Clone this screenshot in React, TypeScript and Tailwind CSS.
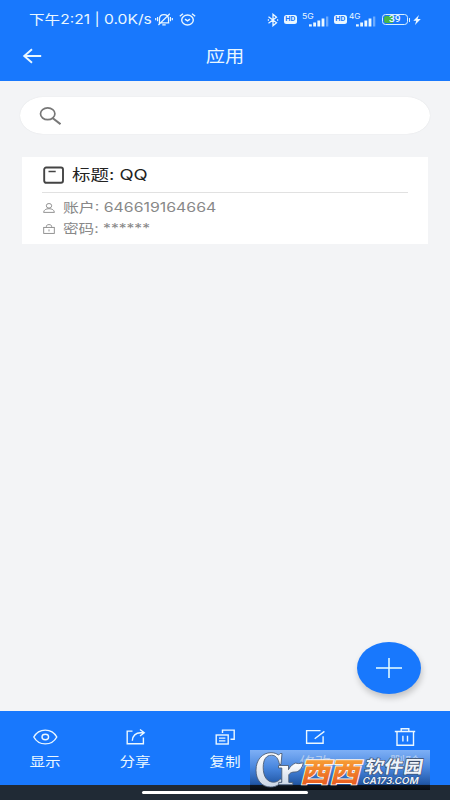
import React from 'react';

interface IconProps {
  className?: string;
}

interface TextProps {
  children: React.ReactNode;
  className?: string;
}

// Text in this layout is wider than it is tall
const Wide: React.FC<TextProps> = ({ children, className = '' }) => (
  <span className={`block whitespace-nowrap ${className}`}>{children}</span>
);

const BellOffIcon: React.FC<IconProps> = ({ className = '' }) => (
  <svg className={className} viewBox="0 0 18 13" fill="none" stroke="currentColor" strokeWidth="1.2">
    <path d="M4.5 9.700V6C4.500 3.300 6.400 1.600 9 1.600S13.500 3.300 13.500 6v3.700M3.700 9.900h10.600M7.300 11.900h3.400M14.800.7 3.400 12M2.600 4v4.300M.7 5v2.300M15.400 4v4.300M17.300 5v2.300" />
  </svg>
);

const AlarmIcon: React.FC<IconProps> = ({ className = '' }) => (
  <svg className={className} viewBox="0 0 17 13" fill="none" stroke="currentColor" strokeWidth="1.4">
    <ellipse cx="8.5" cy="7" rx="5.8" ry="5" />
    <path d="m6 6.200 2.500 1.700L11 6.200M.8 3.200 4 .7M16.200 3.200 13 .7" />
  </svg>
);

const BluetoothIcon: React.FC<IconProps> = ({ className = '' }) => (
  <svg className={className} viewBox="0 0 12 14" fill="none" stroke="currentColor" strokeWidth="1.3">
    <path d="m1.500 3.800 8 6L6 12.700V1.300l3.500 2.900-8 6M.8 7h1.200M10 7h1.200" />
  </svg>
);

const HdBadge: React.FC = () => (
  <span className="flex h-[9px] w-[13px] shrink-0 items-center justify-center rounded-[2.5px] bg-[#eaf7ff] font-[Roboto] text-[6.5px] font-bold leading-none text-[#1878fd]">
    <Wide className="scale-x-[1.15]">HD</Wide>
  </span>
);

const SignalIcon: React.FC<IconProps> = ({ className = '' }) => (
  <svg className={className} viewBox="0 0 20 11" fill="currentColor">
    <rect x="0" y="8.3" width="2.8" height="2.2" />
    <rect x="4.2" y="6.5" width="2.8" height="4" />
    <rect x="8.4" y="4.5" width="2.8" height="6" />
    <rect x="12.6" y="2.5" width="2.8" height="8" />
    <rect x="17" y="0.5" width="2.3" height="10" opacity="0.4" />
  </svg>
);

const BackIcon: React.FC<IconProps> = ({ className = '' }) => (
  <svg className={className} viewBox="0 0 20 16" fill="none" stroke="currentColor" strokeWidth="1.9">
    <path d="M10 1.200 2.200 8l7.800 6.800M2.200 8h17" />
  </svg>
);

const SearchIcon: React.FC<IconProps> = ({ className = '' }) => (
  <svg className={className} viewBox="0 0 22 18" fill="none" stroke="currentColor" strokeWidth="1.7">
    <ellipse cx="8.7" cy="6.8" rx="7.2" ry="5.9" />
    <path d="m13.500 11 8 6.200" strokeWidth="2" />
  </svg>
);

const CardIcon: React.FC<IconProps> = ({ className = '' }) => (
  <svg className={className} viewBox="0 0 21 18" fill="none" stroke="currentColor" strokeWidth="1.9">
    <rect x="1.2" y="1.5" width="18.8" height="15.3" rx="2" />
    <path d="M5.500 5.500h7.200" strokeWidth="1.5" />
  </svg>
);

const UserIcon: React.FC<IconProps> = ({ className = '' }) => (
  <svg className={className} viewBox="0 0 12 10" fill="none" stroke="currentColor" strokeWidth="0.9">
    <ellipse cx="6" cy="2.8" rx="2.7" ry="2.3" />
    <path d="M.6 9.400C.8 6.900 3 5.700 6 5.700s5.200 1.200 5.400 3.700Z" />
  </svg>
);

const LockIcon: React.FC<IconProps> = ({ className = '' }) => (
  <svg className={className} viewBox="0 0 12 10" fill="none" stroke="currentColor" strokeWidth="0.9">
    <rect x="0.7" y="3.4" width="10.6" height="6" />
    <path d="M3.400 3.400V2.300C3.400 1.200 4.500.6 6 .6s2.600.6 2.600 1.700v1.100M6 5.400v2" />
  </svg>
);

const EyeIcon: React.FC<IconProps> = ({ className = '' }) => (
  <svg className={className} viewBox="0 0 26 20" fill="none" stroke="currentColor" strokeWidth="1.4">
    <path d="M1.800 10C4.200 5.600 8 3.100 13.300 3.100S22.400 5.600 24.800 10C22.400 14.400 18.600 16.900 13.300 16.900S4.200 14.400 1.800 10Z" />
    <ellipse cx="13.3" cy="10" rx="3.3" ry="2.7" />
  </svg>
);

const ShareIcon: React.FC<IconProps> = ({ className = '' }) => (
  <svg className={className} viewBox="0 0 26 20" fill="none" stroke="currentColor" strokeWidth="1.4">
    <path d="M10.500 4.100H5.200v12.600h16.200V10.500M10.300 13.800c0-5 3.700-8.100 8.200-8.100h3.500M18 2.500l4.200 3.200-4.200 3.300" />
  </svg>
);

const CopyIcon: React.FC<IconProps> = ({ className = '' }) => (
  <svg className={className} viewBox="0 0 26 20" fill="none" stroke="currentColor" strokeWidth="1.4">
    <rect x="4.2" y="8" width="12" height="9" />
    <path d="M10.500 6V3.100h11.700V12.300H18.500M7 11.100h6.400M7 13.900h6.400" />
  </svg>
);

const EditIcon: React.FC<IconProps> = ({ className = '' }) => (
  <svg className={className} viewBox="0 0 26 20" fill="none" stroke="currentColor" strokeWidth="1.4">
    <path d="M18.500 3.600H4.600v12.700h16.500V9.300M12.700 11.700l9.700-7.300" />
  </svg>
);

const TrashIcon: React.FC<IconProps> = ({ className = '' }) => (
  <svg className={className} viewBox="0 0 26 20" fill="none" stroke="currentColor" strokeWidth="1.4">
    <path d="M2.800 4.500h20.400M9.200 4.300V1.700h7.600v2.600M5 4.700v13.600h16.500V4.700M10.900 8.800v5.700M15.500 8.800v5.700" />
  </svg>
);

const tabs = [
  { label: '显示', Icon: EyeIcon },
  { label: '分享', Icon: ShareIcon },
  { label: '复制', Icon: CopyIcon },
  { label: '修改', Icon: EditIcon },
  { label: '删除', Icon: TrashIcon },
];

const StatusBar: React.FC = () => (
  <div className="flex h-[39px] items-center pl-[29px] pr-[29px]">
    <div className="w-[126px] text-[13px] leading-none">
      <Wide className="w-fit origin-left scale-x-[1.2]">下午2:21 | 0.0K/s</Wide>
    </div>
    <BellOffIcon className="h-[13px] w-[18px]" />
    <AlarmIcon className="ml-[6px] h-[13px] w-[17px]" />
    <BluetoothIcon className="ml-auto h-[14px] w-3" />
    <div className="ml-[5px]">
      <HdBadge />
    </div>
    <div className="flex h-[14px] w-[37px] items-end pl-[5px]">
      <span className="w-[7px] self-start text-[7.5px] leading-none">
        <Wide className="origin-left scale-x-[1.15]">5G</Wide>
      </span>
      <SignalIcon className="h-[11px] w-5 shrink-0" />
    </div>
    <HdBadge />
    <div className="flex h-[14px] w-[35px] items-end pl-[2px]">
      <span className="w-[7px] self-start text-[7.5px] leading-none">
        <Wide className="origin-left scale-x-[1.1]">4G</Wide>
      </span>
      <SignalIcon className="h-[11px] w-5 shrink-0" />
    </div>
    <div className="flex h-[11px] w-[26px] items-center rounded-[3.5px] border border-[#d8efff] p-px">
      <div className="flex h-full w-full items-center justify-center rounded-[2px] bg-[linear-gradient(90deg,#48b647_39%,transparent_39%)] font-[Roboto] text-[8.5px] font-medium leading-none">
        <Wide className="scale-x-[1.2]">39</Wide>
      </div>
    </div>
    <div className="ml-px h-[4px] w-px bg-[#d8efff]" />
    <svg className="ml-[3px] h-[10px] w-2" viewBox="0 0 8 10" fill="currentColor">
      <path d="M6 0 .3 5.700h2.900L2 10l5.800-6H4.600Z" />
    </svg>
  </div>
);

const Watermark: React.FC = () => (
  <svg className="absolute left-[250px] top-[750px] h-10 w-[180px]" viewBox="0 0 180 40">
    <defs>
      <linearGradient id="plate" x1="0" y1="0" x2="0" y2="1">
        <stop offset="0" stopColor="#b4cdf2" stopOpacity="0.65" />
        <stop offset="0.45" stopColor="#5b8bd0" stopOpacity="0.7" />
        <stop offset="0.86" stopColor="#234a85" stopOpacity="0.75" />
        <stop offset="0.88" stopColor="#0a1019" stopOpacity="0.8" />
        <stop offset="1" stopColor="#05080d" stopOpacity="0.9" />
      </linearGradient>
      <linearGradient id="silver" x1="0" y1="0" x2="0" y2="1">
        <stop offset="0" stopColor="#ffffff" />
        <stop offset="1" stopColor="#cbd6e6" />
      </linearGradient>
      <linearGradient id="orange" x1="0" y1="0" x2="0" y2="1">
        <stop offset="0.15" stopColor="#f9a838" />
        <stop offset="1" stopColor="#e54d1b" />
      </linearGradient>
    </defs>
    <rect width="180" height="40" fill="url(#plate)" />
    <g stroke="#4d5d76" strokeWidth="0.9" fill="url(#silver)">
      <path d="M32 3.500 31 14.500h-1.500C28.300 8.500 26 5.200 21.500 5.200c-5.400 0-8.300 4.500-8.300 12.200 0 9.200 4 14.800 10.300 14.800 3 0 5-1.200 6.800-3.200l2 1.400c-2.700 4.400-6.600 6.600-11.800 6.600C12 37 6 30.300 6 20.300 6 9.800 12.300 2.700 21 2.700c3.100 0 5.500.8 7.600 2.400l1.600-1.600Z" />
      <path d="M28.500 15.500h10v4.200c2-4 4.500-5.500 7-6.600l3.200.5 4.600-.8c-1 5.800-4.600 9.300-8.300 9.200-2.800 0-4.800.5-6.200 2.800v7.600h4v2.300H28.700v-2.300h3.100V18h-3.300Z" />
    </g>
    <g fontFamily="'Noto Sans CJK SC', sans-serif" fontWeight="700" paintOrder="stroke">
      <text transform="translate(50 32) skewX(-14)" fontSize="27" textLength="59" lengthAdjust="spacingAndGlyphs" fill="url(#orange)" stroke="#fff4e8" strokeWidth="1.8" fontWeight="900">西西</text>
      <text transform="translate(114 22.8) skewX(-10)" fontSize="17.5" textLength="58" lengthAdjust="spacingAndGlyphs" fill="#eef3fa" stroke="#3b4d69" strokeWidth="1.2">软件园</text>
    </g>
    <text transform="translate(112 33.5) skewX(-12)" fontFamily="Inter, sans-serif" fontWeight="600" fontSize="9.5" textLength="56" lengthAdjust="spacingAndGlyphs" fill="#edf3fc" stroke="#263a58" strokeWidth="0.6" paintOrder="stroke">CA173.COM</text>
  </svg>
);

export default function App() {
  return (
    <div className="relative flex h-[800px] w-[450px] flex-col overflow-hidden bg-[#f3f4f6] font-[Inter,'Noto_Sans_CJK_SC',sans-serif]">
      <header className="h-[81px] bg-[#1878fd] text-[#eaf7ff]">
        <StatusBar />
        <div className="grid h-[34px] grid-cols-[1fr_auto_1fr] items-center pl-[22px] pr-[22px]">
          <BackIcon className="h-4 w-5" />
          <h1 className="text-base leading-none">
            <Wide className="scale-x-[1.2]">应用</Wide>
          </h1>
        </div>
      </header>

      <main className="flex grow flex-col px-5 pt-4">
        <div className="flex h-[37px] items-center rounded-[23px/18.5px] bg-white pl-[19px] text-[#777] shadow-[0_0_1px_#d5d7da]">
          <SearchIcon className="h-[18px] w-[22px]" />
        </div>

        <section className="mx-0.5 mt-[23px] h-[87px] bg-white px-5">
          <div className="flex h-9 items-center gap-2 border-b border-[#e1e1e1] pl-[1px] text-[#222]">
            <CardIcon className="h-[18px] w-[21px] text-[#444]" />
            <span className="text-[15px] leading-none">
              <Wide className="origin-left scale-x-[1.23]">标题: QQ</Wide>
            </span>
          </div>
          <div className="mt-1 flex h-[21px] items-center gap-[8px] pl-[1px] text-[13px] leading-none text-[#888]">
            <UserIcon className="h-[10px] w-3" />
            <Wide className="origin-left scale-x-[1.22]">账户: 646619164664</Wide>
          </div>
          <div className="flex h-[21px] items-center gap-[8px] pl-[1px] text-[13px] leading-none text-[#888]">
            <LockIcon className="h-[10px] w-3" />
            <Wide className="origin-left scale-x-[1.2]">密码: ******</Wide>
          </div>
        </section>

        <button className="mb-[17px] mr-[9px] mt-auto flex h-[52px] w-16 items-center justify-center self-end rounded-[50%] bg-[#1878fd] text-[#eaffff] shadow-[1px_4px_6px_#0003]">
          <svg className="h-5 w-[26px]" viewBox="0 0 26 20" stroke="currentColor" strokeWidth="1.5">
            <path d="M0 10h26M13 0v20" />
          </svg>
        </button>
      </main>

      <nav className="grid h-[74px] grid-cols-5 bg-[#1878fd] pt-4 text-[#eaf7ff]">
        {tabs.map(({ label, Icon }) => (
          <div key={label} className="flex flex-col items-center gap-2">
            <Icon className="h-5 w-[26px]" />
            <span className="text-[13px] leading-none">
              <Wide className="scale-x-[1.2]">{label}</Wide>
            </span>
          </div>
        ))}
      </nav>
      <div className="flex h-[15px] justify-center bg-[#202a35] pt-[6px]">
        <div className="h-[3px] w-[166px] rounded-full bg-white" />
      </div>

      <Watermark />
    </div>
  );
}
